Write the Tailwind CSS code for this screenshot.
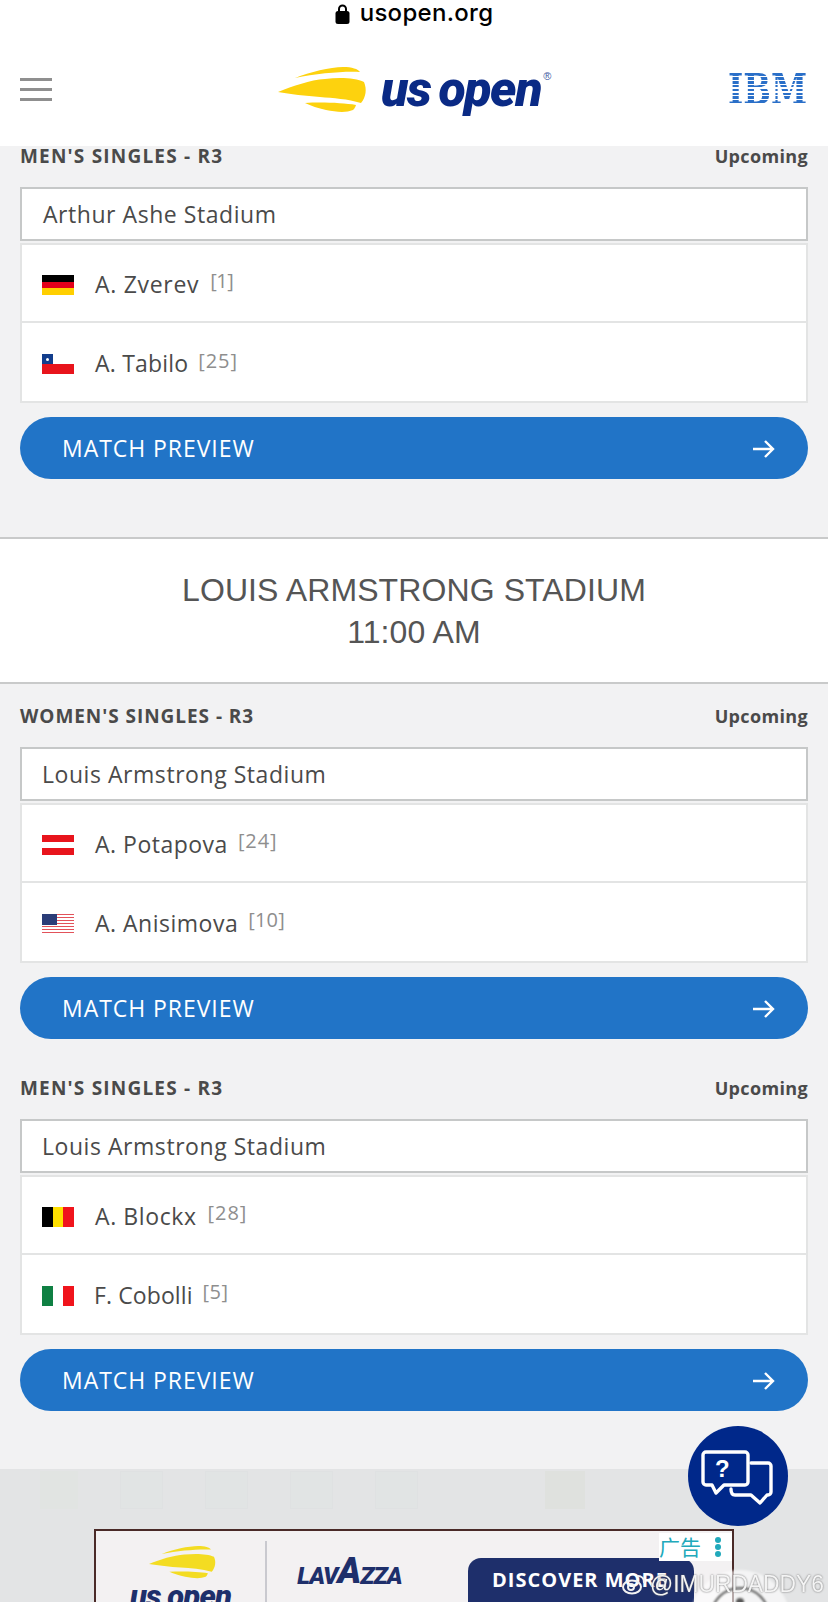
<!DOCTYPE html>
<html lang="en">
<head>
    <meta charset="UTF-8" />
    <meta name="viewport" content="width=device-width, initial-scale=1.0"/>
    <title>US Open - Schedule</title>
    <script src="https://cdn.jsdelivr.net/npm/@tailwindcss/browser@4"></script>
</head>
<body class="relative h-[1602px] overflow-hidden bg-[#f2f2f3] font-['Open_Sans',sans-serif] text-[#4a4a4a]">

    <!-- header -->
    <header class="h-[146px] bg-white">
        <div class="flex h-[26px] items-center justify-center gap-[10px] font-['Inter',sans-serif] text-[24px] font-medium text-black">
            <svg class="h-[21px] w-[15px]" viewBox="0 0 15 21" fill="black"><path d="M3 9V6a4.5 4.5 0 0 1 9 0v3h-2V6a2.5 2.5 0 0 0-5 0v3z"/><rect x="0.5" y="8" width="14" height="13" rx="2.5"/></svg>
            <span class="tracking-[0.3px]">usopen.org</span>
        </div>
        <div class="flex items-start pl-[20px] pr-[21px] pt-[41px]">
            <div class="mt-[11px] flex w-[32px] flex-col gap-[7px]">
                <div class="h-[3px] bg-[#8f8f8f]"></div>
                <div class="h-[3px] bg-[#8f8f8f]"></div>
                <div class="h-[3px] bg-[#8f8f8f]"></div>
            </div>
            <div class="ml-[226px] flex items-start">
                <svg class="h-[46px] w-[90px]" viewBox="0 0 90 46" fill="#fdd20e">
                    <path d="M17 11C32 5 52 0 65 0C74 0 80 2 82 5C68 4 40 6 17 11Z"/>
                    <path d="M0 25C15 19 32 13 47 12C62 10 78 11 86 15C89 22 88 30 83 36C70 32 55 31 42 30C28 29 12 27 0 25Z"/>
                    <path d="M27 36C45 35 65 36 78 38C77 41 76 42 75 43C68 46 58 45 48 43C40 41 33 39 27 36Z"/>
                </svg>
                <span class="ml-[13px] mt-[-6px] font-['Roboto',sans-serif] text-[50px] leading-[56px] font-black italic tracking-[-1.4px] [word-spacing:-3px] whitespace-nowrap text-[#0a2a85]">us open</span>
                <span class="ml-[2px] mt-[3px] font-['Liberation_Sans',sans-serif] text-[11px] leading-[12px] text-[#41589f]">®</span>
            </div>
            <div class="ml-auto mt-[6px] origin-right scale-x-[0.76] bg-[repeating-linear-gradient(to_bottom,#2a6fc8_0,#2a6fc8_2.7px,transparent_2.7px,transparent_3.9px)] bg-clip-text font-['DejaVu_Serif',serif] text-[43px] leading-[33px] font-bold text-transparent">IBM</div>
        </div>
    </header>

    <!-- arthur ashe, last match -->
    <section class="px-[20px] pb-[58px]">
        <div class="mb-[21px] flex h-[20px] items-center justify-between text-[19px] font-bold">
            <span class="tracking-[1.2px]">MEN'S SINGLES - R3</span>
            <span class="text-[18px] tracking-[0.35px]">Upcoming</span>
        </div>
        <div class="flex h-[54px] items-center border-2 border-[#c6c8c8] bg-white pl-[21px] text-[23px] tracking-[0.55px]">Arthur Ashe Stadium</div>
        <div class="mt-[2px] border-2 border-[#e3e4e4] bg-white">
            <div class="flex h-[78px] items-center border-b-2 border-[#e3e4e4] pl-[20px] pt-[2px]">
                <div class="mt-[2px] flex h-[20px] w-[32px] flex-col">
                    <div class="flex-1 bg-black"></div><div class="flex-1 bg-[#e3001b]"></div><div class="flex-1 bg-[#ffcf00]"></div>
                </div>
                <span class="ml-[21px] text-[23px] tracking-[0.7px]">A. Zverev</span>
                <span class="mb-[6px] ml-[11px] text-[20px] tracking-[-0.5px] text-[#8e8e8e]">[1]</span>
            </div>
            <div class="flex h-[78px] items-center pl-[20px] pt-[2px]">
                <div class="mt-[2px] flex h-[20px] w-[32px] flex-col">
                    <div class="flex flex-1"><div class="flex w-[11px] items-center justify-center bg-[#123d8c]"><div class="h-[3px] w-[3px] rounded-full bg-white"></div></div><div class="flex-1 bg-white"></div></div>
                    <div class="flex-1 bg-[#e8141c]"></div>
                </div>
                <span class="ml-[21px] text-[23px] tracking-[0.2px]">A. Tabilo</span>
                <span class="mb-[5px] ml-[10px] text-[20px] tracking-[0.9px] text-[#8e8e8e]">[25]</span>
            </div>
        </div>
        <a class="mt-[14px] flex h-[62px] items-center justify-between rounded-full bg-[#2174c7] pl-[42px] pr-[33px] text-[23px] tracking-[0.95px] text-white">
            MATCH PREVIEW
            <svg class="mt-[1px] h-[20px] w-[22px]" viewBox="0 0 22 20" fill="none" stroke="white" stroke-width="2.4"><path d="M0 10H20M12 2l8 8-8 8"/></svg>
        </a>
    </section>

    <!-- court heading -->
    <div class="flex h-[147px] flex-col items-center justify-center border-y-2 border-[#c9caca] bg-white font-['Liberation_Sans',sans-serif] text-[32px] leading-[42px] tracking-[0.1px] text-[#555555]">
        <span>LOUIS ARMSTRONG STADIUM</span>
        <span>11:00 AM</span>
    </div>

    <!-- louis armstrong matches -->
    <section class="px-[20px] pb-[58px] pt-[22px]">
        <div class="mb-[21px] flex h-[20px] items-center justify-between text-[19px] font-bold">
            <span class="tracking-[0.95px]">WOMEN'S SINGLES - R3</span>
            <span class="text-[18px] tracking-[0.35px]">Upcoming</span>
        </div>
        <div class="flex h-[54px] items-center border-2 border-[#c6c8c8] bg-white pl-[20px] text-[23px] tracking-[0.55px]">Louis Armstrong Stadium</div>
        <div class="mt-[2px] border-2 border-[#e3e4e4] bg-white">
            <div class="flex h-[78px] items-center border-b-2 border-[#e3e4e4] pl-[20px] pt-[2px]">
                <div class="mt-[2px] flex h-[20px] w-[32px] flex-col">
                    <div class="flex-1 bg-[#e8141c]"></div><div class="flex-1 bg-white"></div><div class="flex-1 bg-[#e8141c]"></div>
                </div>
                <span class="ml-[21px] text-[23px] tracking-[0.5px]">A. Potapova</span>
                <span class="mb-[6px] ml-[10px] text-[20px] tracking-[0.9px] text-[#8e8e8e]">[24]</span>
            </div>
            <div class="flex h-[78px] items-center pl-[20px] pt-[2px]">
                <div class="relative mt-[2px] h-[20px] w-[32px] bg-[repeating-linear-gradient(to_bottom,#e2525a_0,#e2525a_1.5px,#ffffff_1.5px,#ffffff_3px)]">
                    <div class="absolute left-0 top-0 h-[11px] w-[15px] bg-[#2b3d78]"></div>
                </div>
                <span class="ml-[21px] text-[23px] tracking-[0.5px]">A. Anisimova</span>
                <span class="mb-[6px] ml-[10px] text-[20px] tracking-[0.2px] text-[#8e8e8e]">[10]</span>
            </div>
        </div>
        <a class="mt-[14px] flex h-[62px] items-center justify-between rounded-full bg-[#2174c7] pl-[42px] pr-[33px] text-[23px] tracking-[0.95px] text-white">
            MATCH PREVIEW
            <svg class="mt-[1px] h-[20px] w-[22px]" viewBox="0 0 22 20" fill="none" stroke="white" stroke-width="2.4"><path d="M0 10H20M12 2l8 8-8 8"/></svg>
        </a>

        <div class="mb-[21px] mt-[39px] flex h-[20px] items-center justify-between text-[19px] font-bold">
            <span class="tracking-[1.2px]">MEN'S SINGLES - R3</span>
            <span class="text-[18px] tracking-[0.35px]">Upcoming</span>
        </div>
        <div class="flex h-[54px] items-center border-2 border-[#c6c8c8] bg-white pl-[20px] text-[23px] tracking-[0.55px]">Louis Armstrong Stadium</div>
        <div class="mt-[2px] border-2 border-[#e3e4e4] bg-white">
            <div class="flex h-[78px] items-center border-b-2 border-[#e3e4e4] pl-[20px] pt-[2px]">
                <div class="mt-[2px] flex h-[20px] w-[32px]">
                    <div class="flex-1 bg-black"></div><div class="flex-1 bg-[#ffe000]"></div><div class="flex-1 bg-[#f0141c]"></div>
                </div>
                <span class="ml-[21px] text-[23px] tracking-[0.6px]">A. Blockx</span>
                <span class="mb-[6px] ml-[11px] text-[20px] tracking-[0.9px] text-[#8e8e8e]">[28]</span>
            </div>
            <div class="flex h-[78px] items-center pl-[20px] pt-[2px]">
                <div class="mt-[2px] flex h-[20px] w-[32px]">
                    <div class="flex-1 bg-[#0f8043]"></div><div class="flex-1 bg-white"></div><div class="flex-1 bg-[#f0141c]"></div>
                </div>
                <span class="ml-[20px] text-[23px] tracking-[0.1px]">F. Cobolli</span>
                <span class="mb-[6px] ml-[10px] text-[20px] tracking-[0.5px] text-[#8e8e8e]">[5]</span>
            </div>
        </div>
        <a class="mt-[14px] flex h-[62px] items-center justify-between rounded-full bg-[#2174c7] pl-[42px] pr-[33px] text-[23px] tracking-[0.95px] text-white">
            MATCH PREVIEW
            <svg class="mt-[1px] h-[20px] w-[22px]" viewBox="0 0 22 20" fill="none" stroke="white" stroke-width="2.4"><path d="M0 10H20M12 2l8 8-8 8"/></svg>
        </a>
    </section>

    <!-- ad area -->
    <div class="relative h-[200px] bg-[#e3e4e5] px-[94px] pt-[60px]">
        <!-- faint placeholder tiles behind the ad -->
        <div class="absolute left-[40px] top-[2px] flex gap-[42px]">
            <div class="h-[38px] w-[38px] bg-[#e1e4e2]"></div>
            <div class="h-[38px] w-[43px] border border-[#dfe1e2] bg-[#e1e4e4]"></div>
            <div class="h-[38px] w-[43px] border border-[#dfe1e2] bg-[#e1e4e4]"></div>
            <div class="h-[38px] w-[43px] border border-[#dfe1e2] bg-[#e1e4e4]"></div>
            <div class="h-[38px] w-[43px] border border-[#dfe1e2] bg-[#e1e4e4]"></div>
            <div class="ml-[85px] h-[38px] w-[40px] bg-[#dfe1de]"></div>
        </div>
        <div class="relative flex h-[120px] items-start border-2 border-[#4a2a28] bg-[#f3f1f2]">
            <div class="flex w-[169px] flex-col items-center pt-[15px]">
                <svg class="ml-[4px] h-[33px] w-[68px]" viewBox="0 0 90 46" preserveAspectRatio="none" fill="#f3dc22">
                    <path d="M17 11C32 5 52 0 65 0C74 0 80 2 82 5C68 4 40 6 17 11Z"/>
                    <path d="M0 25C15 19 32 13 47 12C62 10 78 11 86 15C89 22 88 30 83 36C70 32 55 31 42 30C28 29 12 27 0 25Z"/>
                    <path d="M27 36C45 35 65 36 78 38C77 41 76 42 75 43C68 46 58 45 48 43C40 41 33 39 27 36Z"/>
                </svg>
                <span class="font-['Roboto',sans-serif] text-[31px] leading-[36px] font-black italic tracking-[-0.9px] whitespace-nowrap text-[#1e2f6b]">us open</span>
            </div>
            <div class="mt-[10px] h-[100px] w-[2px] bg-[#c9c9cf]"></div>
            <div class="ml-[30px] mt-[22px] flex h-[36px] w-[105px] items-end justify-center font-['Roboto',sans-serif] text-[24px] leading-[26px] font-black italic tracking-[-1px] whitespace-nowrap text-[#1e2f6b]">LAV<span class="text-[36px] leading-[36px]">A</span>ZZA</div>
            <div class="ml-[66px] mt-[27px] flex h-[60px] w-[226px] shrink-0 items-start justify-center rounded-[13px] bg-[#1e2f6b] pr-[2px] pt-[7px] font-['Open_Sans',sans-serif] text-[20px] font-bold tracking-[1px] whitespace-nowrap text-white">DISCOVER MORE</div>
            <div class="absolute right-0 top-[2px] flex h-[28px] w-[73px] items-center gap-[14px] bg-white font-['Noto_Sans_CJK_SC',sans-serif] text-[21px] text-[#21a9bb]">
                <span>广告</span>
                <div class="flex flex-col gap-[1px]">
                    <div class="h-[6px] w-[6px] rounded-full bg-[#21a9bb]"></div>
                    <div class="h-[6px] w-[6px] rounded-full bg-[#21a9bb]"></div>
                    <div class="h-[6px] w-[6px] rounded-full bg-[#21a9bb]"></div>
                </div>
            </div>
        </div>
    </div>

    <!-- floating chat button -->
    <div class="absolute left-[688px] top-[1426px] h-[100px] w-[100px] rounded-full bg-[#00288a]">
        <svg class="absolute inset-0 h-full w-full" viewBox="0 0 100 100" fill="none" stroke="white" stroke-width="3.4" stroke-linejoin="round" stroke-linecap="round">
            <path d="M18 26H57a3 3 0 0 1 3 3V56a3 3 0 0 1-3 3H36L28 67L24 59H18a3 3 0 0 1-3-3V29a3 3 0 0 1 3-3Z"/>
            <path d="M63 37H80a3 3 0 0 1 3 3V66a3 3 0 0 1-3 3H79L72 77L63 69H47C44 69 43 66 43 63"/>
        </svg>
        <span class="absolute left-[27px] top-[29px] font-['Liberation_Sans',sans-serif] text-[24px] leading-[28px] font-bold text-white">?</span>
    </div>

    <!-- watermark -->
    <div class="absolute left-[690px] top-[1570px] flex h-[100px] w-[100px] justify-center rounded-full bg-white/60 pt-[17px] blur-[1px]">
        <div class="flex h-[60px] w-[60px] justify-center rounded-full border-2 border-[#555555] pt-[9px]">
            <div class="h-[8px] w-[8px] rounded-full bg-[#555555]"></div>
        </div>
    </div>
    <div class="absolute left-[622px] top-[1568px] flex items-center font-['Liberation_Sans',sans-serif] text-[24px] leading-[32px] text-[#f4f4f4] [text-shadow:0_0_2px_#5f5f5f]">
        <svg class="mr-[4px] h-[22px] w-[24px]" viewBox="0 0 24 22" fill="none" stroke="#f2f2f2" stroke-width="2"><ellipse cx="10" cy="14" rx="9" ry="6.5"/><circle cx="9" cy="14" r="3"/><path d="M15 3a6 6 0 0 1 7 7"/></svg>
        <span class="origin-left scale-x-[0.95] whitespace-nowrap">@IMURDADDY6</span>
    </div>

</body>
</html>
